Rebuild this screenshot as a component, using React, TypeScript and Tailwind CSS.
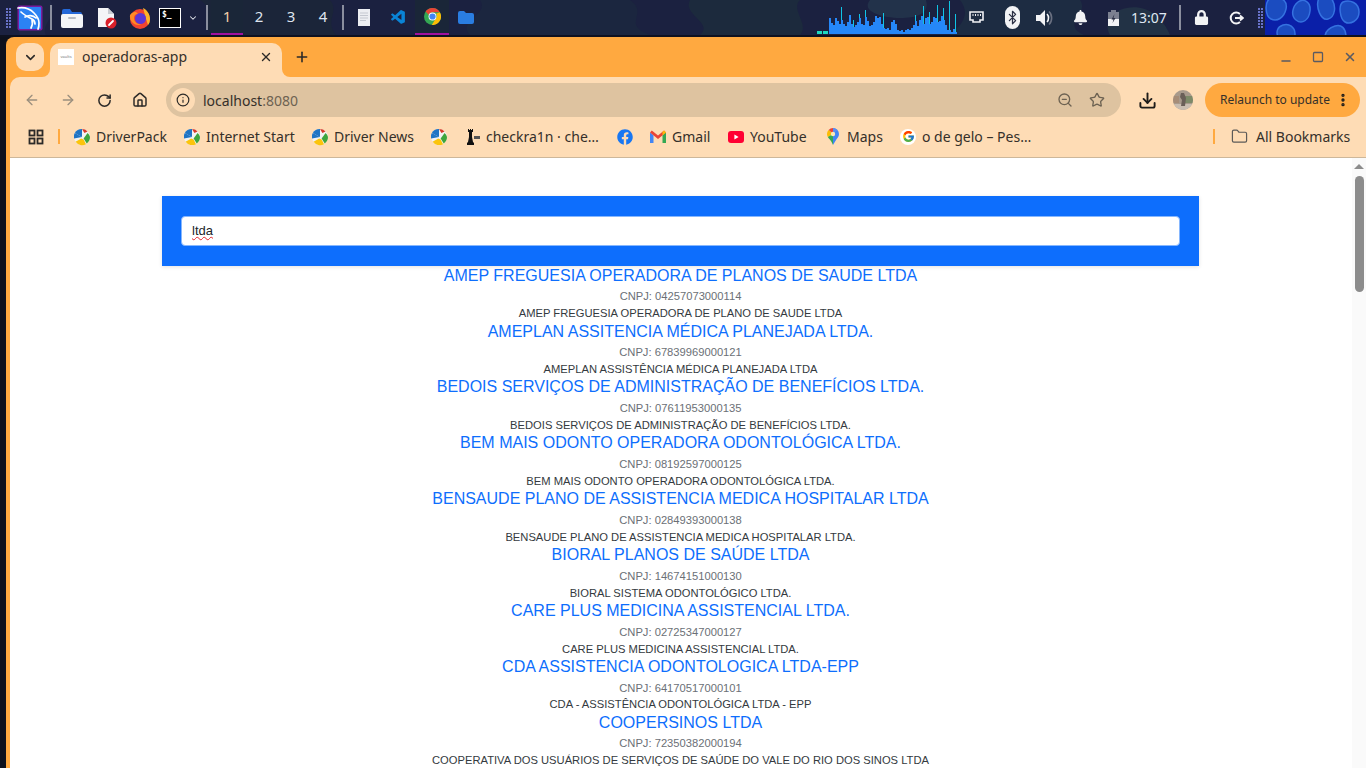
import React from "react";
import {
  ArrowLeft, ArrowRight, RotateCw, Home, Info, ZoomOut, Star, Download, MoreVertical,
  Folder, X, Plus, ChevronDown, Minus, Square, Bluetooth,
} from "lucide-react";
import { FaFacebook, FaBell, FaLock } from "react-icons/fa";
import { FcGoogle } from "react-icons/fc";
import { VscVscode } from "react-icons/vsc";

const UI = "font-['Noto_Sans','Open_Sans',sans-serif]";

const rows = [
  ["AMEP FREGUESIA OPERADORA DE PLANOS DE SAUDE LTDA", "04257073000114", "AMEP FREGUESIA OPERADORA DE PLANO DE SAUDE LTDA"],
  ["AMEPLAN ASSITENCIA MÉDICA PLANEJADA LTDA.", "67839969000121", "AMEPLAN ASSISTÊNCIA MÉDICA PLANEJADA LTDA"],
  ["BEDOIS SERVIÇOS DE ADMINISTRAÇÃO DE BENEFÍCIOS LTDA.", "07611953000135", "BEDOIS SERVIÇOS DE ADMINISTRAÇÃO DE BENEFÍCIOS LTDA."],
  ["BEM MAIS ODONTO OPERADORA ODONTOLÓGICA LTDA.", "08192597000125", "BEM MAIS ODONTO OPERADORA ODONTOLÓGICA LTDA."],
  ["BENSAUDE PLANO DE ASSISTENCIA MEDICA HOSPITALAR LTDA", "02849393000138", "BENSAUDE PLANO DE ASSISTENCIA MEDICA HOSPITALAR LTDA."],
  ["BIORAL PLANOS DE SAÚDE LTDA", "14674151000130", "BIORAL SISTEMA ODONTOLÓGICO LTDA."],
  ["CARE PLUS MEDICINA ASSISTENCIAL LTDA.", "02725347000127", "CARE PLUS MEDICINA ASSISTENCIAL LTDA."],
  ["CDA ASSISTENCIA ODONTOLOGICA LTDA-EPP", "64170517000101", "CDA - ASSISTÊNCIA ODONTOLÓGICA LTDA - EPP"],
  ["COOPERSINOS LTDA", "72350382000194", "COOPERATIVA DOS USUÁRIOS DE SERVIÇOS DE SAÚDE DO VALE DO RIO DOS SINOS LTDA"],
];

const bars = [16,11,9,16,13,10,14,10,8,12,19,10,7,9,12,16,10,9,17,13,8,9,12,18,16,17,10,6,5,6,4,12,14,10,4,3,4,2,4,5,4,6,9,13,8,14,18,10,16,17,10,12,17,16,12,13,18,14,9,4,4,2,5,2];
const peaks: Record<number, number> = {6:27,12:14,15:20,18:24,24:15,27:21,43:19,47:28,50:22,54:29,57:26,60:33,63:20,66:28,69:30,72:25};

function Wallpaper() {
  return (
    <svg className="absolute inset-0 h-full w-full" viewBox="0 0 1265 35" preserveAspectRatio="none">
      <rect width="1265" height="35" fill="#1b2140" />
      <path d="M200 0h130c10 12-6 20 6 35H215c-20-10 5-22-15-35Z" fill="#1b2539" />
      <path d="M480 0h150c20 14-10 24 20 35H470c-14-14 20-20 10-35Z" fill="#1b263f" />
      <path d="M690 0h110c-10 10 10 24 0 35H700c14-12-18-20-10-35Z" fill="#1c2a3d" />
      <path d="M870 0c-10 12 14 18 30 18s30-4 26-18Z" fill="#22324a" />
      <path d="M960 0h120c10 14-20 24 4 35H950c14-12 20-22 10-35Z" fill="#1d2c42" />
      <path d="M1120 10c20-8 40 2 50 25h-60c-6-10 0-20 10-25Z" fill="#223245" />
      <path d="M30 0h20c10 14-10 24-4 35H20c-6-12 18-20 10-35Z" fill="#1f2646" />
    </svg>
  );
}

function Grip() {
  return (
    <div className="grid grid-cols-2 gap-[1px]">
      {Array.from({ length: 14 }).map((_, i) => (
        <div key={i} className="h-[2px] w-[2px] bg-[#6872c8]" />
      ))}
    </div>
  );
}

function PSep() {
  return <div className="h-[25px] w-[2px] bg-[#8a8e9e]" />;
}

function Slot({ w, children, className = "" }: { w: string; children?: React.ReactNode; className?: string }) {
  return <div className={`flex h-full shrink-0 items-center justify-center ${w} ${className}`}>{children}</div>;
}

function Kali() {
  return (
    <svg width="26" height="26" viewBox="0 0 26 26">
      <rect x="0.5" y="0.5" width="25" height="25" rx="2" fill="#7a1c9e" />
      <rect x="2" y="2" width="22" height="22" rx="1" fill="#2b82f3" />
      <path d="M1 3c6-1 12 1 16 5 3 3 5 6 5 10 0 2 0 4-1 6M19 13c-3-3-8-3-11-1M4 7c3 3 7 5 11 7 2 1 3 3 3 5M15 15c1 3 0 6-1 8" fill="none" stroke="#fff" strokeWidth="1.7" strokeLinecap="round" />
    </svg>
  );
}

function FolderApp() {
  return (
    <svg width="22" height="20" viewBox="0 0 22 20">
      <path d="M1 3a2 2 0 0 1 2-2h6l2 3h8a2 2 0 0 1 2 2v3H1Z" fill="#2468d8" />
      <path d="M0 8a2 2 0 0 1 2-2h18a2 2 0 0 1 2 2v10a2 2 0 0 1-2 2H2a2 2 0 0 1-2-2Z" fill="#f4f5f7" />
      <rect x="7" y="9" width="8" height="2" rx="1" fill="#b8bcc4" />
    </svg>
  );
}

function DocEdit() {
  return (
    <svg width="22" height="22" viewBox="0 0 22 22">
      <path d="M2 1h10l6 6v13H2Z" fill="#f4f5f7" />
      <path d="M12 1l6 6h-6Z" fill="#c9ccd2" />
      <circle cx="15" cy="16" r="5.5" fill="#d8202a" />
      <path d="M13 18l4-4" stroke="#fff" strokeWidth="1.8" strokeLinecap="round" />
    </svg>
  );
}

function Firefox() {
  return (
    <svg width="22" height="22" viewBox="0 0 22 22">
      <circle cx="11" cy="12" r="10" fill="#f2452f" />
      <path d="M14 1c4 2 7 6 7 11 0 3-1 5-2 6-2-6-3-10-5-17Z" fill="#fdb32a" />
      <circle cx="11.5" cy="11.5" r="5.5" fill="#5c37d6" />
      <path d="M1 8c2-3 4-3 6-3l2 2c-3 0-4 2-4 4 0 4 4 7 8 6-6 3-13-2-12-9Z" fill="#ff8a24" />
    </svg>
  );
}

function Terminal() {
  return (
    <div className="flex h-[20px] w-[22px] items-start border border-white bg-black pl-[2px] font-['DejaVu_Sans_Mono',monospace] text-[8px] font-bold leading-[12px] text-white">$_</div>
  );
}

function Chrome({ size = 18 }: { size?: number }) {
  return (
    <svg width={size} height={size} viewBox="0 0 24 24">
      <circle cx="12" cy="12" r="12" fill="#34a853" />
      <path d="M12 0a12 12 0 0 1 10.4 6H12a6 6 0 0 0-5.6 3.6L2.2 5A12 12 0 0 1 12 0Z" fill="#ea4335" />
      <path d="M22.4 6A12 12 0 0 1 11 24l5.2-8.6A6 6 0 0 0 17 8Z" fill="#fbbc05" />
      <circle cx="12" cy="12" r="5.6" fill="#fff" />
      <circle cx="12" cy="12" r="4.4" fill="#4285f4" />
    </svg>
  );
}

function AudioBars() {
  return (
    <svg width="141" height="35" viewBox="0 0 141 35" className="shrink-0">
      <rect x="0" y="31" width="5" height="3" fill="#1fd8c0" />
      <rect x="6" y="31" width="5" height="3" fill="#1fd8c0" />
      {bars.map((h, i) => (
        <g key={i}>
          {peaks[i] ? <rect x={12 + i * 2} y={34 - peaks[i]} width="1" height={peaks[i]} fill="#10c4e4" /> : null}
          <rect x={12 + i * 2} y={34 - h} width="2" height={h} fill="#2587f8" />
        </g>
      ))}
    </svg>
  );
}

function Ball({ size = 18 }: { size?: number }) {
  return (
    <svg width={size} height={size} viewBox="0 0 20 20">
      <circle cx="10" cy="10" r="10" fill="#f2f2f2" />
      <path d="M10 10 1 5a10 10 0 0 0-1 7Z" fill="#1f74c4" />
      <path d="M10 10 1 5a10 10 0 0 1 9-5Z" fill="#1f74c4" />
      <path d="M10 0a10 10 0 0 1 7 3l-4 2Z" fill="#d83a2a" />
      <path d="M20 10a10 10 0 0 1-4 8l-4-6 5-7a10 10 0 0 1 3 5Z" fill="#3ea53e" />
      <path d="M15 19a10 10 0 0 1-13-3l7-4 3 1Z" fill="#fbc40c" />
    </svg>
  );
}

function Gmail() {
  return (
    <svg width="16" height="13" viewBox="0 0 16 13">
      <path d="M0 2.5V13h3.5V5.2Z" fill="#4285f4" />
      <path d="M16 2.5V13h-3.5V5.2Z" fill="#34a853" />
      <path d="M0 2.5 1.8.6 8 5.4 14 .6l2 1.9L8 9Z" fill="#ea4335" />
      <path d="M12.5 1.8 14.2.6 16 2.5l-3.5 2.7Z" fill="#fbbc05" />
    </svg>
  );
}

function YouTube() {
  return (
    <svg width="16" height="12" viewBox="0 0 16 12">
      <rect width="16" height="12" rx="3" fill="#ff0033" />
      <path d="M6.4 3.4v5.2L10.6 6Z" fill="#fff" />
    </svg>
  );
}

function MapsPin() {
  return (
    <svg width="12" height="17" viewBox="0 0 12 17">
      <path d="M6 0a6 6 0 0 1 6 6c0 2-1 3.5-2.5 5.2L6 17Z" fill="#4285f4" />
      <path d="M6 0a6 6 0 0 0-4.4 2L6 6Z" fill="#ea4335" />
      <path d="M1.6 2A6 6 0 0 0 0 6c0 1 .3 2 .8 3L6 6Z" fill="#fbbc05" />
      <path d="M.8 9c.6 1 1.2 1.6 1.8 2.3C4 13 5 14.5 6 17V6Z" fill="#34a853" />
      <path d="M6 0c2 0 3.3 1 4.4 2L6 6Z" fill="#5a8df0" />
      <circle cx="6" cy="6" r="2.2" fill="#fbe9b7" />
    </svg>
  );
}

function Checkra() {
  return (
    <svg width="16" height="18" viewBox="0 0 16 18">
      <path d="M4 1h1v1h1V1h1v1h1V1h1v3H8v5l1 5 1 1v2H3v-2l1-1 1-5V4H4Z" fill="#111" />
      <rect x="10" y="8" width="6" height="3" fill="#555" />
    </svg>
  );
}

function Bm({ w, icon, label, gap = "gap-[6px]" }: { w: string; icon: React.ReactNode; label?: string; gap?: string }) {
  return (
    <div className={`flex h-full shrink-0 items-center ${gap} ${w}`}>
      <span className="flex w-[16px] shrink-0 items-center justify-center">{icon}</span>
      {label ? <span className="whitespace-nowrap text-[14px] text-[#35302a]">{label}</span> : null}
    </div>
  );
}

function Row({ t, c, s }: { t: string; c: string; s: string }) {
  return (
    <div className="text-center">
      <div className="h-[19px] text-[16px] leading-[19px] text-[#0d6efd]">{t}</div>
      <div className="mt-[3.75px] h-[16.95px] text-[11.2px] leading-[17px] text-[#6b7076]">CNPJ: {c}</div>
      <div className="h-[16.2px] whitespace-nowrap text-[11.2px] leading-[17px] text-[#343a40]">{s}</div>
    </div>
  );
}

export default function App() {
  return (
    <div className={`flex h-screen w-screen flex-col overflow-hidden bg-[#0d101c] ${UI}`}>
      {/* desktop panel */}
      <div className="flex h-[37px] shrink-0 border-b-2 border-[#0e1120]">
        <div className="relative flex h-[35px] w-[1265px] shrink-0 items-center">
          <Wallpaper />
          <div className="relative flex h-full w-full items-center">
            <Slot w="w-[16px]"><Grip /></Slot>
            <Slot w="w-[28px]"><Kali /></Slot>
            <Slot w="w-[14px]"><PSep /></Slot>
            <Slot w="w-[28px]"><FolderApp /></Slot>
            <Slot w="w-[42px]"><DocEdit /></Slot>
            <Slot w="w-[24px]"><Firefox /></Slot>
            <Slot w="w-[36px]"><Terminal /></Slot>
            <Slot w="w-[10px]"><ChevronDown size={12} strokeWidth={2.5} className="text-[#e6e8ee]" /></Slot>
            <Slot w="w-[13px]" className="justify-end pr-[3px]"><PSep /></Slot>
            {["1", "2", "3", "4"].map((n, i) => (
              <div key={n} className={`flex h-full w-[32px] shrink-0 items-center justify-center border-b-2 text-[15px] ${i === 0 ? "border-[#a0109f] bg-[#1a2638] text-[#f0cfa8]" : "border-transparent text-[#dfe4ee]"}`}>{n}</div>
            ))}
            <Slot w="w-[8px]"><PSep /></Slot>
            <Slot w="w-[34px]">
              <svg width="12" height="17" viewBox="0 0 12 17"><rect width="12" height="17" fill="#eceef2" /><path d="M2 4h8M2 6.5h8M2 9h8M2 11.5h6" stroke="#c4c8d0" /></svg>
            </Slot>
            <Slot w="w-[34px]"><VscVscode size={17} className="text-[#0a84d6]" /></Slot>
            <div className="flex h-full w-[34px] shrink-0 items-center justify-center border-b-2 border-[#a0109f] bg-[#1a2638]"><Chrome size={17} /></div>
            <Slot w="w-[34px]">
              <svg width="16" height="13" viewBox="0 0 16 13"><path d="M0 2a2 2 0 0 1 2-2h4l2 2h6a2 2 0 0 1 2 2v7a2 2 0 0 1-2 2H2a2 2 0 0 1-2-2Z" fill="#2a7de1" /></svg>
            </Slot>
            <div className="flex-1" />
            <AudioBars />
            <Slot w="w-[36px]">
              <svg width="15" height="13" viewBox="0 0 15 13"><path d="M1 1h13v8h-3v2H4V9H1Z" fill="none" stroke="#f0f1f4" strokeWidth="1.6" /><path d="M4 3v2M6.5 3v2M9 3v2M11.5 3v2" stroke="#f0f1f4" /></svg>
            </Slot>
            <Slot w="w-[36px]">
              <div className="flex h-[23px] w-[15px] items-center justify-center rounded-[8px] bg-[#f2f3f5]"><Bluetooth size={15} strokeWidth={2} className="text-[#2a2f44]" /></div>
            </Slot>
            <Slot w="w-[30px]">
              <svg width="18" height="16" viewBox="0 0 18 16"><path d="M0 5h4l5-5v16l-5-5H0Z" fill="#f2f3f5" /><path d="M11 4c2 2 2 6 0 8" fill="none" stroke="#f2f3f5" strokeWidth="1.6" /><path d="M13 1.5c3.5 3 3.5 10 0 13" fill="none" stroke="#6a7080" strokeWidth="1.6" /></svg>
            </Slot>
            <Slot w="w-[40px]"><FaBell size={15} className="text-[#f2f3f5]" /></Slot>
            <Slot w="w-[26px]">
              <svg width="11" height="16" viewBox="0 0 11 16"><rect x="3" y="0" width="5" height="2" fill="#7b8090" /><rect y="2" width="11" height="14" fill="#7b8090" /><rect y="9" width="11" height="7" fill="#f2f3f5" /><path d="M6.5 4 3.5 9.5h2L4.5 13l3-5h-2Z" fill="#2a2f44" /></svg>
            </Slot>
            <Slot w="w-[46px]"><span className="text-[14px] text-[#dfe7f2]">13:07</span></Slot>
            <Slot w="w-[16px]"><PSep /></Slot>
            <Slot w="w-[26px]"><FaLock size={15} className="text-[#f2f3f5]" /></Slot>
            <Slot w="w-[40px]" className="ml-[2px]">
              <svg width="15" height="14" viewBox="0 0 15 14"><path d="M11 3a5.5 5.5 0 1 0 0 8" fill="none" stroke="#f2f3f5" strokeWidth="2" /><path d="M6 7h8M11 4.5 14 7l-3 2.5" fill="none" stroke="#f2f3f5" strokeWidth="1.8" /></svg>
            </Slot>
            <Slot w="w-[9px]"><Grip /></Slot>
          </div>
        </div>
        <svg className="h-[35px] flex-1" viewBox="0 0 101 35" preserveAspectRatio="none">
          <rect width="101" height="35" fill="#0a1fa8" />
          <g fill="#1b4cc0" stroke="#3572e0" strokeWidth="1.5">
            <path d="M6-2c9-2 17 2 15 11S12 22 6 19-1 1 6-2Z" />
            <path d="M33 2c6-4 13 0 12 9s-8 14-14 9-3-14 2-18Z" />
            <path d="M54-2h12c6 8 4 19-3 21s-13-12-9-21Z" />
            <path d="M78 2c7-3 16 1 16 10s-9 13-14 10-7-17-2-20Z" />
            <path d="M18 25c6-2 12 2 12 9v3H13c-2-5-1-10 5-12Z" />
            <path d="M70 26c6-2 11 2 11 11H60c0-5 4-9 10-11Z" />
          </g>
        </svg>
      </div>

      {/* browser */}
      <div className="flex min-h-0 flex-1">
        <div className="w-[6px] shrink-0" />
        <div className="flex min-w-0 flex-1 flex-col rounded-tl-[8px] bg-[#ffa940] pl-[4px]">
          {/* tab strip */}
          <div className="flex h-[40px] shrink-0 items-end">
            <div className="mb-[6px] ml-[6px] flex h-[28px] w-[28px] items-center justify-center rounded-[10px] bg-[#fedcb5]">
              <ChevronDown size={15} strokeWidth={2.5} className="text-[#2c2a28]" />
            </div>
            <div className="relative ml-[6px] flex h-[34px] w-[232px] items-center rounded-t-[10px] bg-[#fedcb5] pb-[7px] pl-[8px] pr-[9px]">
              <div className="absolute bottom-0 left-[-8px] h-[8px] w-[8px] bg-[#fedcb5]"><div className="h-full w-full rounded-br-[8px] bg-[#ffa940]" /></div>
              <div className="absolute bottom-0 right-[-8px] h-[8px] w-[8px] bg-[#fedcb5]"><div className="h-full w-full rounded-bl-[8px] bg-[#ffa940]" /></div>
              <div className="flex h-[16px] w-[16px] items-center justify-center overflow-hidden whitespace-nowrap bg-white text-[4px] text-[#777]">vaults</div>
              <span className="ml-[8px] text-[14px] text-[#35302a]">operadoras-app</span>
              <X size={14} strokeWidth={2.4} className="ml-auto text-[#2c2a28]" />
            </div>
            <div className="mb-[12px] ml-[12px] flex h-[16px] items-center">
              <Plus size={16} strokeWidth={2.4} className="text-[#2c2a28]" />
            </div>
            <div className="flex-1" />
            <div className="mb-[13px] flex items-center text-[#5a5a62]">
              <span className="flex w-[32px] justify-center"><Minus size={14} strokeWidth={2.2} className="translate-y-[4px]" /></span>
              <span className="flex w-[32px] justify-center"><Square size={12} strokeWidth={2.6} /></span>
              <span className="flex w-[32px] justify-center"><X size={14} strokeWidth={2.6} /></span>
            </div>
          </div>
          {/* toolbar */}
          <div className="flex h-[41px] shrink-0 items-center rounded-tl-[10px] bg-[#fedcb5] pt-[5px]">
            <span className="flex w-[44px] justify-center"><ArrowLeft size={16} strokeWidth={2} className="text-[#9b8f7e]" /></span>
            <span className="flex w-[28px] justify-center"><ArrowRight size={16} strokeWidth={2} className="text-[#9b8f7e]" /></span>
            <span className="flex w-[44px] justify-center"><RotateCw size={15} strokeWidth={2.4} className="text-[#2c2a28]" /></span>
            <span className="flex w-[28px] justify-center"><Home size={16} strokeWidth={2.2} className="text-[#2c2a28]" /></span>
            <div className="ml-[12px] flex h-[34px] w-[955px] shrink-0 items-center rounded-full bg-[#dec3a0] pl-[5px] pr-[16px]">
              <span className="flex h-[24px] w-[24px] items-center justify-center rounded-full bg-[#fedcb5]"><Info size={14} strokeWidth={2} className="text-[#2c2a28]" /></span>
              <span className="ml-[8px] text-[14px] text-[#35302a]">localhost<span className="text-[#6d6252]">:8080</span></span>
              <ZoomOut size={16} strokeWidth={2} className="ml-auto text-[#6d6252]" />
              <Star size={16} strokeWidth={2} className="ml-[16px] text-[#6d6252]" />
            </div>
            <span className="flex w-[52px] justify-center"><Download size={19} strokeWidth={2.4} className="text-[#1e1c1a]" /></span>
            <span className="flex w-[20px] justify-center">
              <svg width="20" height="20" viewBox="0 0 20 20">
                <defs><clipPath id="av"><circle cx="10" cy="10" r="10" /></clipPath></defs>
                <g clipPath="url(#av)">
                  <rect width="20" height="20" fill="#a89a8c" />
                  <rect x="11" y="6" width="9" height="7" fill="#7d8a68" />
                  <rect y="6" width="6" height="7" fill="#a68d78" />
                  <rect y="14" width="20" height="6" fill="#c9bdb0" />
                  <path d="M8 3h3l2 5-1 8H8l1-6-2-3Z" fill="#6a5f58" />
                </g>
              </svg>
            </span>
            <div className="ml-[12px] flex h-[34px] w-[155px] shrink-0 items-center whitespace-nowrap rounded-full bg-[#ffa940] pl-[15px] text-[12px] text-[#35302a]">
              Relaunch to update
              <MoreVertical size={16} strokeWidth={3} className="ml-auto mr-[9px] text-[#1e1c1a]" />
            </div>
          </div>
          {/* bookmarks */}
          <div className="flex h-[40px] shrink-0 items-center border-b border-[#cdb79a] bg-[#fedcb5] pb-[2px]">
            <span className="flex w-[52px] justify-center">
              <svg width="16" height="16" viewBox="0 0 16 16" fill="none" stroke="#2c2a28" strokeWidth="1.8"><rect x="1.5" y="1.5" width="5" height="5" /><rect x="9.5" y="1.5" width="5" height="5" /><rect x="1.5" y="9.5" width="5" height="5" /><rect x="9.5" y="9.5" width="5" height="5" /></svg>
            </span>
            <div className="-ml-[4px] h-[15px] w-[2px] bg-[#ffa940]" />
            <div className="w-[14px]" />
            <Bm w="w-[110px]" icon={<Ball />} label="DriverPack" />
            <Bm w="w-[128px]" icon={<Ball size={16} />} label="Internet Start" />
            <Bm w="w-[119px]" icon={<Ball />} label="Driver News" />
            <Bm w="w-[33px]" icon={<Ball size={16} />} />
            <Bm w="w-[153px]" icon={<Checkra />} label="checkra1n · che…" />
            <Bm w="w-[33px]" icon={<FaFacebook size={16} className="text-[#1877f2]" />} />
            <Bm w="w-[78px]" icon={<Gmail />} label="Gmail" />
            <Bm w="w-[97px]" icon={<YouTube />} label="YouTube" />
            <Bm w="w-[75px]" icon={<MapsPin />} label="Maps" />
            <Bm w="w-[136px]" icon={<span className="flex h-[16px] w-[16px] items-center justify-center rounded-full bg-white"><FcGoogle size={13} /></span>} label="o de gelo – Pes…" />
            <div className="w-[177px]" />
            <div className="h-[15px] w-[2px] bg-[#ffa940]" />
            <Folder size={17} strokeWidth={1.7} className="ml-[16px] text-[#5c5a58]" />
            <span className="ml-[8px] whitespace-nowrap text-[14px] text-[#35302a]">All Bookmarks</span>
          </div>
          {/* page */}
          <div className="flex min-h-0 flex-1 bg-white font-['Liberation_Sans',Arial,sans-serif]">
            <div className="min-w-0 flex-1 overflow-hidden pr-[1px] pt-[38px]">
              <div className="mx-auto w-[1037px]">
                <div className="mb-[-0.35px] bg-[#0d6efd] px-[19px] py-[20px] shadow-[0_1px_4px_rgba(0,0,0,0.12)]">
                  <div className="flex h-[30px] items-center rounded-[4px] border border-[#86b7fe] bg-white px-[10px] text-[13px] text-[#212529]">
                    <span className="underline decoration-[#e5232a] decoration-wavy decoration-1">ltda</span>
                  </div>
                </div>
                {rows.map((r) => (
                  <Row key={r[1]} t={r[0]} c={r[1]} s={r[2]} />
                ))}
              </div>
            </div>
            <div className="flex w-[14px] shrink-0 flex-col items-center bg-[#fafafa] pt-[6px]">
              <div className="h-0 w-0 border-x-[5px] border-b-[5px] border-x-transparent border-b-[#8c8c8c]" />
              <div className="mt-[7px] h-[116px] w-[9px] rounded-full bg-[#8c8c8c]" />
            </div>
          </div>
        </div>
      </div>
    </div>
  );
}
